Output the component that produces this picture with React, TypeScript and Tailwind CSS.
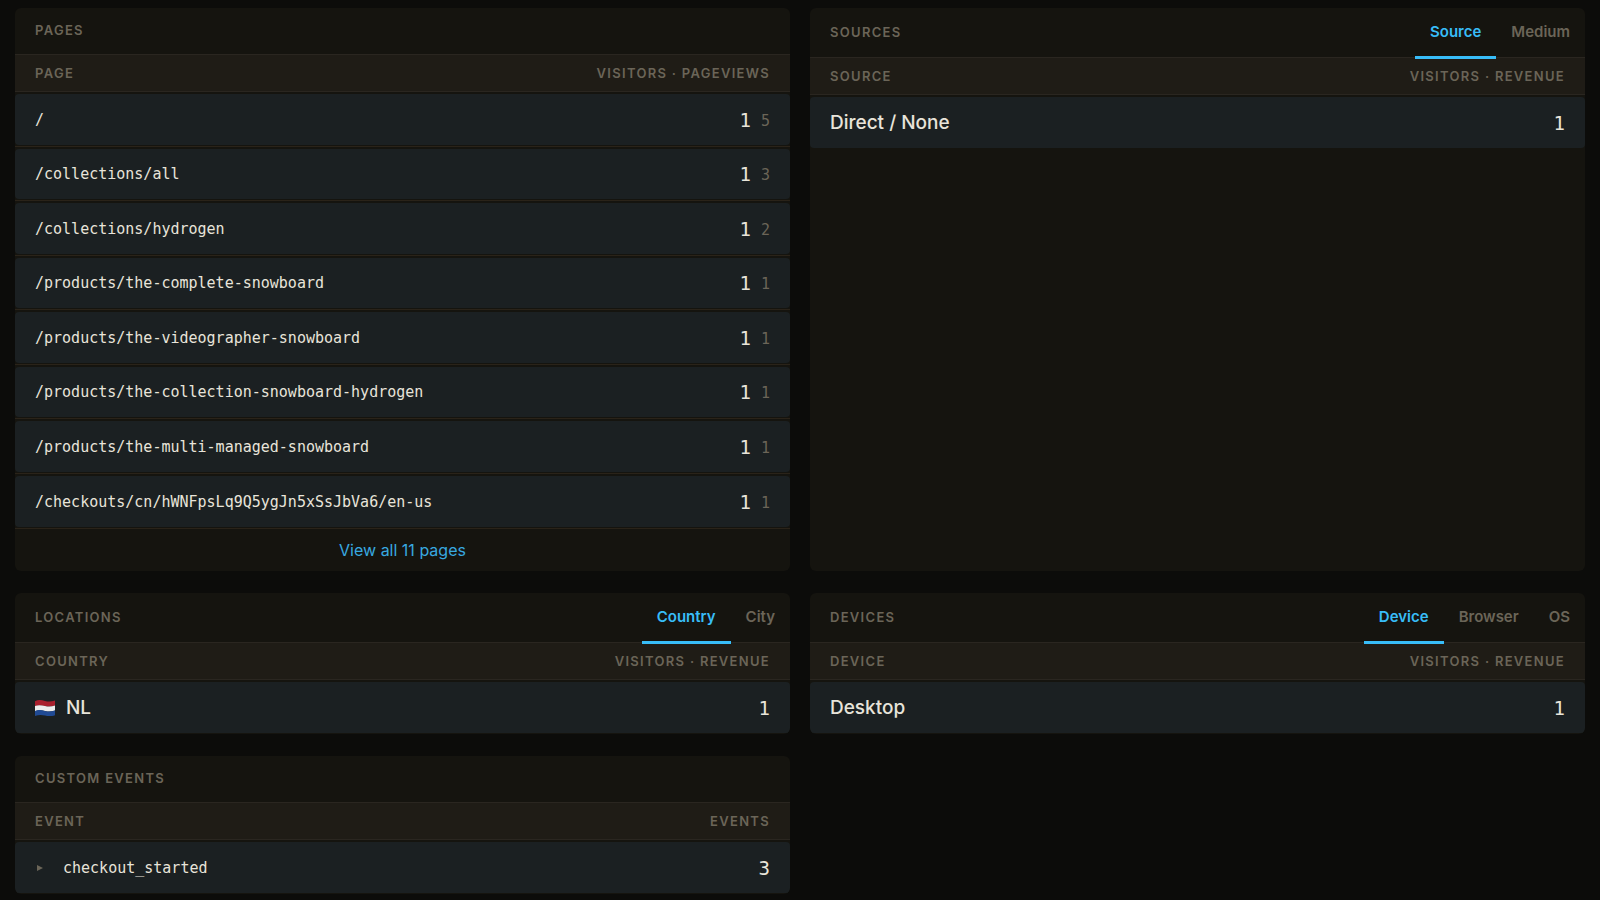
import { useState } from 'react';
import type { ReactNode } from 'react';
import clsx from 'clsx';

type Row = {
  label: string;
  value: number;
  secondary?: number;
  mono?: boolean;
  icon?: ReactNode;
  expandable?: boolean;
};

const pages: Row[] = [
  { label: '/', value: 1, secondary: 5, mono: true },
  { label: '/collections/all', value: 1, secondary: 3, mono: true },
  { label: '/collections/hydrogen', value: 1, secondary: 2, mono: true },
  { label: '/products/the-complete-snowboard', value: 1, secondary: 1, mono: true },
  { label: '/products/the-videographer-snowboard', value: 1, secondary: 1, mono: true },
  { label: '/products/the-collection-snowboard-hydrogen', value: 1, secondary: 1, mono: true },
  { label: '/products/the-multi-managed-snowboard', value: 1, secondary: 1, mono: true },
  { label: '/checkouts/cn/hWNFpsLq9Q5ygJn5xSsJbVa6/en-us', value: 1, secondary: 1, mono: true },
];

function FlagNL() {
  return (
    <svg className="w-5 h-4 mr-[11px] shrink-0" viewBox="0 0 20 16" aria-hidden="true">
      <path fill="#a91f2d" d="M0 1.2C3.5-.6 6.5.2 10 1s6.500.7 10-.6v5.100c-3.500 1.300-6.500 1.400-10 .6S3.500 5 0 6.300z" />
      <path fill="#ececec" d="M0 6C3.500 4.600 6.500 5.200 10 6s6.500.7 10-.6v5c-3.500 1.300-6.500 1.400-10 .6S3.500 10 0 11.200z" />
      <path fill="#204a94" d="M0 10.900C3.500 9.500 6.500 10.200 10 11s6.500.7 10-.6v4.800c-3.500 1.300-6.500 1.200-10 .4s-6.500-.8-10 .4z" />
    </svg>
  );
}

function Tabs({ tabs }: { tabs: string[] }) {
  const [active, setActive] = useState(tabs[0]);

  return (
    <div role="tablist" className="flex self-stretch">
      {tabs.map(tab => (
        <button
          key={tab}
          type="button"
          role="tab"
          aria-selected={tab === active}
          onClick={() => setActive(tab)}
          className={clsx(
            '-mb-[2px] px-[15px] border-b-3 text-[15px] leading-5 font-semibold cursor-pointer relative',
            tab === active ? 'text-[#38bdf8] border-[#38bdf8]' : 'text-[#6b6558] border-transparent'
          )}
        >
          {tab}
        </button>
      ))}
    </div>
  );
}

type PanelProps = {
  title: string;
  columns: [string, string];
  rows: Row[];
  tabs?: string[];
  footer?: ReactNode;
};

function Panel({ title, columns, rows, tabs, footer }: PanelProps) {
  return (
    <section className="bg-[#15140f] rounded-md overflow-hidden">
      <div
        className={clsx(
          'flex items-center justify-between pl-5 border-b border-[#2a2620]',
          tabs ? 'h-[50px]' : 'h-[47px]'
        )}
      >
        <h2 className="pb-[2px] text-[13px] leading-5 font-semibold tracking-widest uppercase text-[#6b6558]">
          {title}
        </h2>
        {tabs && <Tabs tabs={tabs} />}
      </div>

      <table className="w-full border-separate border-spacing-0">
        <thead>
          <tr className="bg-[#1f1c16] text-[13px] leading-5 tracking-widest uppercase text-[#6b6558]">
            <th scope="col" className="h-[37px] px-5 py-0 border-b border-[#2a2620] text-left font-semibold">
              {columns[0]}
            </th>
            <th scope="col" className="h-[37px] px-5 py-0 border-b border-[#2a2620] text-right font-semibold">
              {columns[1]}
            </th>
          </tr>
        </thead>
        <tbody>
          {rows.map(row => (
            <tr key={row.label} className="group">
              <td className="p-0 pt-[2px] pb-px border-b border-[#2a2319] group-last:border-b-0">
                <div className="h-[51px] group-even:h-[50px] group-even:group-last:h-[51px] pl-5 flex items-center bg-[#1b2022] rounded-l-sm">
                  {row.expandable && (
                    <button type="button" aria-label="Expand" className="w-7 flex pl-[2px] cursor-pointer">
                      <svg className="w-[6px] h-[6px]" viewBox="0 0 6 6" fill="#6b6558">
                        <path d="M0 0l6 3-6 3z" />
                      </svg>
                    </button>
                  )}
                  {row.icon}
                  <span
                    className={clsx(
                      'text-[#e8e4da]',
                      row.mono
                        ? "font-['DejaVu_Sans_Mono',monospace] text-[15px] leading-5"
                        : 'text-[19px] leading-6 font-medium'
                    )}
                  >
                    {row.label}
                  </span>
                </div>
              </td>
              <td className="p-0 pt-[2px] pb-px border-b border-[#2a2319] group-last:border-b-0">
                <div className="h-[51px] group-even:h-[50px] group-even:group-last:h-[51px] pr-5 flex items-center justify-end bg-[#1b2022] rounded-r-sm font-['DejaVu_Sans_Mono',monospace]">
                  <span className="text-[19px] leading-6 text-[#e8e4da]">{row.value}</span>
                  {row.secondary !== undefined && (
                    <span className="ml-[10px] pt-[2px] text-[15px] leading-6 text-[#6b6558]">{row.secondary}</span>
                  )}
                </div>
              </td>
            </tr>
          ))}
        </tbody>
      </table>

      {footer}
    </section>
  );
}

export default function App() {
  return (
    <main className="min-h-screen bg-[#0c0c0a] px-[15px] pt-2 pb-[6px] font-['Inter',sans-serif]">
      <div className="grid grid-cols-2 gap-x-5 gap-y-[22px]">
        <Panel
          title="Pages"
          columns={['Page', 'Visitors · Pageviews']}
          rows={pages}
          footer={
            <div className="h-[43px] flex items-center justify-center border-t border-[#2a2319]">
              <a href="#pages" className="text-base text-[#38a9e0]">View all 11 pages</a>
            </div>
          }
        />
        <Panel
          title="Sources"
          columns={['Source', 'Visitors · Revenue']}
          rows={[{ label: 'Direct / None', value: 1 }]}
          tabs={['Source', 'Medium']}
        />
        <Panel
          title="Locations"
          columns={['Country', 'Visitors · Revenue']}
          rows={[{ label: 'NL', value: 1, icon: <FlagNL /> }]}
          tabs={['Country', 'City']}
        />
        <Panel
          title="Devices"
          columns={['Device', 'Visitors · Revenue']}
          rows={[{ label: 'Desktop', value: 1 }]}
          tabs={['Device', 'Browser', 'OS']}
        />
        <Panel
          title="Custom Events"
          columns={['Event', 'Events']}
          rows={[{ label: 'checkout_started', value: 3, mono: true, expandable: true }]}
        />
      </div>
    </main>
  );
}
